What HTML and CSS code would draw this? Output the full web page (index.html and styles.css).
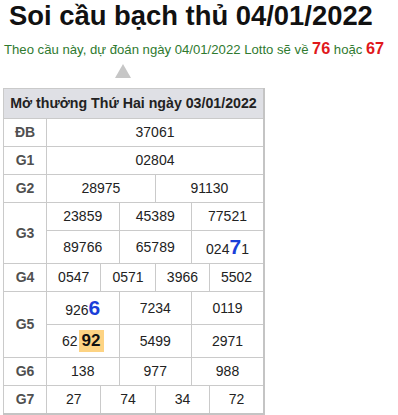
FILE: index.html
```html
<!DOCTYPE html>
<html lang="vi">
<head>
<meta charset="utf-8">
<title>Soi cầu bạch thủ 04/01/2022</title>
<link rel="stylesheet" href="styles.css">
</head>
<body>
<div class="page">
  <h1 class="title">Soi cầu bạch thủ 04/01/2022</h1>
  <p class="predict">Theo cầu này, dự đoán ngày 04/01/2022 Lotto sẽ về <b class="hot">76</b> hoặc <b class="hot">67</b></p>
  <div class="arrow"></div>
  <table class="kq">
    <colgroup>
      <col class="c-label">
      <col class="c"><col class="c"><col class="c"><col class="c"><col class="c"><col class="c">
      <col class="c"><col class="c"><col class="c"><col class="c"><col class="c"><col class="c">
    </colgroup>
    <thead>
      <tr><th colspan="13" class="head">Mở thưởng Thứ Hai ngày 03/01/2022</th></tr>
    </thead>
    <tbody>
      <tr><td class="lbl">ĐB</td><td colspan="12">37061</td></tr>
      <tr><td class="lbl">G1</td><td colspan="12">02804</td></tr>
      <tr><td class="lbl">G2</td><td colspan="6">28975</td><td colspan="6">91130</td></tr>
      <tr><td class="lbl" rowspan="2">G3</td><td colspan="4">23859</td><td colspan="4">45389</td><td colspan="4">77521</td></tr>
      <tr><td colspan="4">89766</td><td colspan="4">65789</td><td colspan="4">024<span class="big">7</span>1</td></tr>
      <tr><td class="lbl">G4</td><td colspan="3">0547</td><td colspan="3">0571</td><td colspan="3">3966</td><td colspan="3">5502</td></tr>
      <tr><td class="lbl" rowspan="2">G5</td><td colspan="4">926<span class="big">6</span></td><td colspan="4">7234</td><td colspan="4">0119</td></tr>
      <tr><td colspan="4">62<span class="mark">92</span></td><td colspan="4">5499</td><td colspan="4">2971</td></tr>
      <tr><td class="lbl">G6</td><td colspan="4">138</td><td colspan="4">977</td><td colspan="4">988</td></tr>
      <tr><td class="lbl">G7</td><td colspan="3">27</td><td colspan="3">74</td><td colspan="3">34</td><td colspan="3">72</td></tr>
    </tbody>
  </table>
</div>
</body>
</html>
```

FILE: styles.css
```css
html, body {
  margin: 0;
  padding: 0;
  background: #ffffff;
}

body {
  font-family: "Liberation Sans", Arial, sans-serif;
  color: #222222;
}

.page {
  padding: 0 3px;
}

.title {
  margin: 0 0 6px 0;
  padding-left: 6px;
  font-size: 27.4px;
  line-height: 32px;
  font-weight: bold;
  color: #111111;
}

.predict {
  margin: 0;
  padding-left: 1px;
  font-size: 13.15px;
  line-height: 20px;
  color: #2f7a2f;
  white-space: nowrap;
}

.hot {
  font-size: 16.3px;
  color: #e0181b;
}

.arrow {
  width: 0;
  height: 0;
  margin: 4px 0 10px 112px;
  border-left: 8px solid transparent;
  border-right: 8px solid transparent;
  border-bottom: 14px solid #c6c6c6;
}

.kq {
  width: 262px;
  table-layout: fixed;
  border-collapse: collapse;
  border-right: 2px solid #c4c4c4;
  border-bottom: 2px solid #c4c4c4;
}

.c-label {
  width: 43px;
}

.kq th,
.kq td {
  border: 1px solid #cacaca;
  text-align: center;
  vertical-align: middle;
  font-size: 14px;
  line-height: 17px;
  padding: 5px 0;
  white-space: nowrap;
}

.kq .head {
  background: #dfe0e5;
  color: #222222;
  font-size: 14.2px;
  font-weight: bold;
  padding: 6px 0;
}

.kq td {
  color: #222222;
}

.kq .lbl {
  font-weight: bold;
  color: #505050;
}

.big {
  font-size: 21px;
  line-height: 21px;
  font-weight: bold;
  color: #1b3fd8;
}

.mark {
  display: inline-block;
  margin-left: 1px;
  padding: 2px 3px;
  font-size: 17px;
  line-height: 18px;
  font-weight: bold;
  color: #111111;
  background: #fdd383;
}
```
